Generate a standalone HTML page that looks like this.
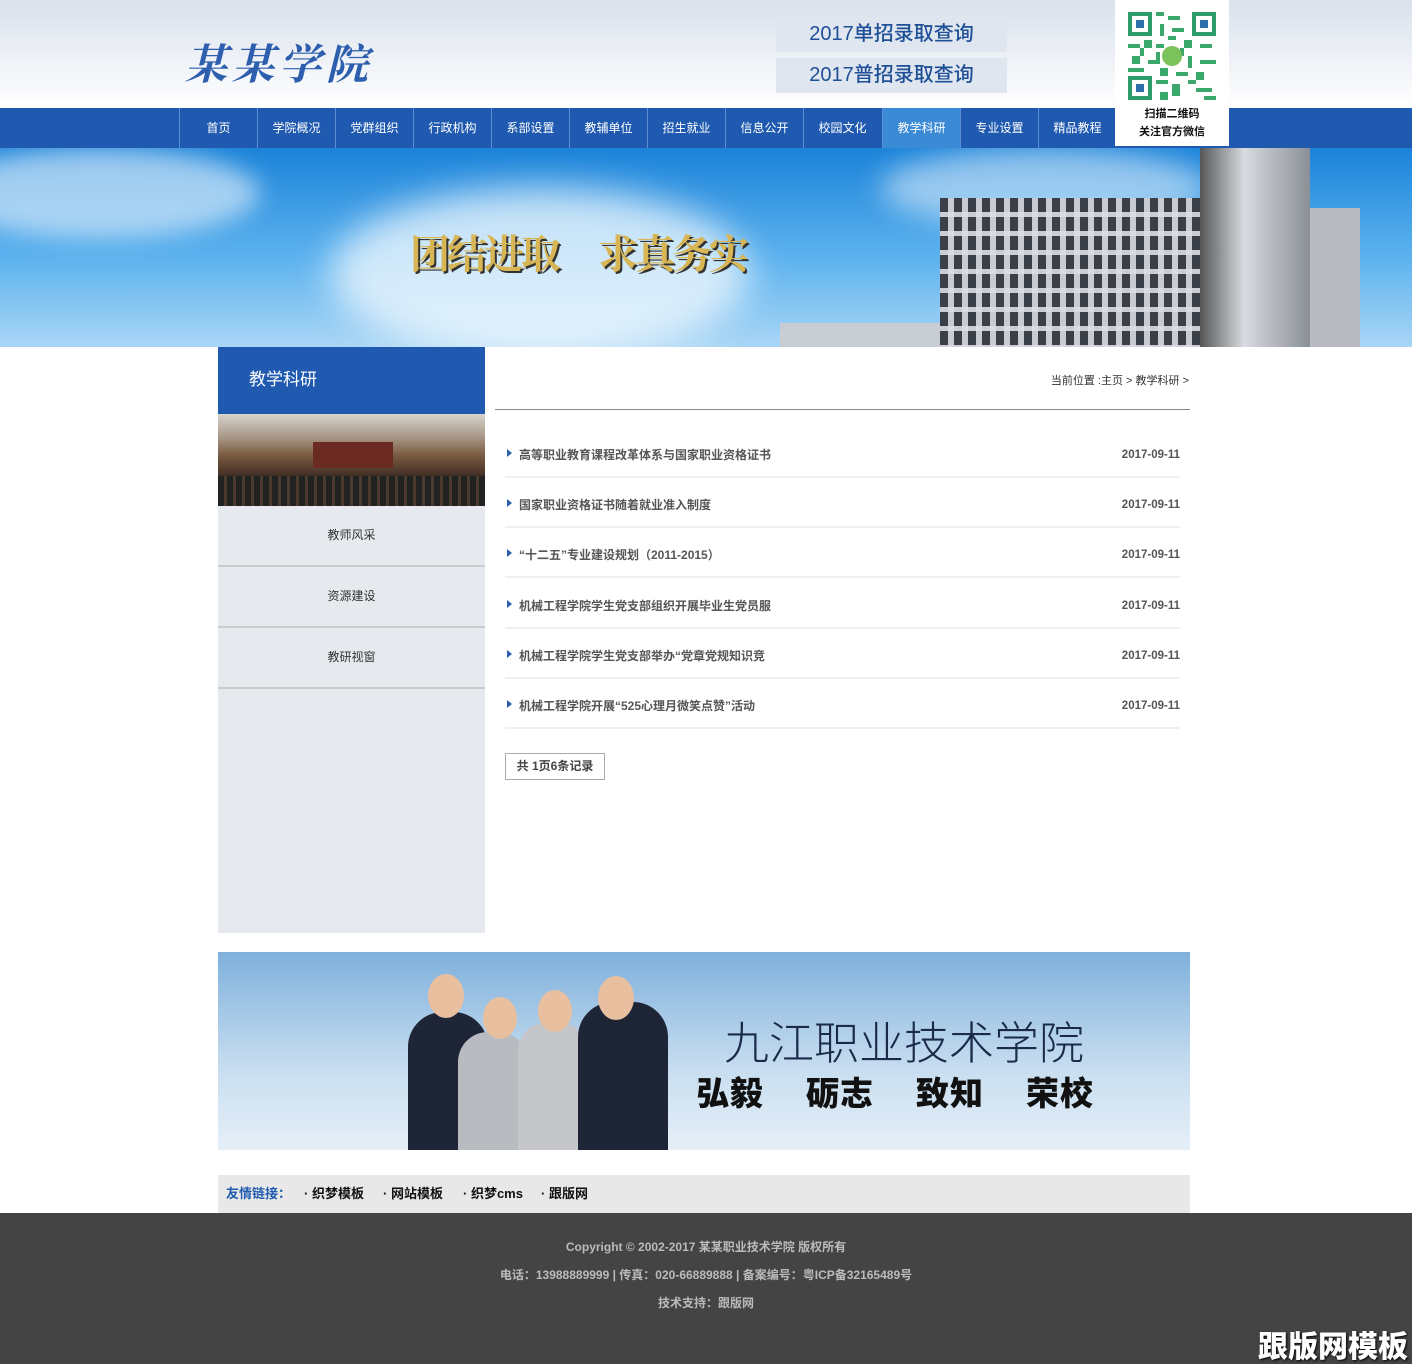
<!DOCTYPE html>
<html><head><meta charset="utf-8"><style>
*{margin:0;padding:0;box-sizing:border-box}
body{width:1427px;height:1364px;overflow:hidden;background:#fff;font-family:"Liberation Sans","Noto Sans CJK SC",sans-serif;position:relative;font-size:12px;color:#333}
.abs{position:absolute}
#head{left:0;top:0;width:1412px;height:108px;background:linear-gradient(#d9e1ec,#f4f6f9 70%,#fff)}
#logo{left:185px;top:32px;font-family:"Noto Serif CJK SC",serif;font-size:42px;color:#2d5fae;letter-spacing:5px;font-style:italic;font-weight:bold}
.btn{left:776px;width:231px;height:35px;background:#dfe6ef;color:#1f4f96;font-size:20px;text-align:center;line-height:35px;font-weight:500}
#qr{left:1115px;top:0;width:114px;height:146px;background:#fff;z-index:3;text-align:center}
#qr .t{font-size:11px;font-weight:bold;color:#111;line-height:18px}
#nav{left:0;top:108px;width:1412px;height:40px;background:#205ab0}
#nav a{position:absolute;top:0;height:40px;width:78px;line-height:40px;text-align:center;color:#fff;font-size:12px;border-left:1px solid #5f8ed0}
#hero{left:0;top:148px;width:1412px;height:199px;background:linear-gradient(180deg,#1b83d9,#5cb2ee 55%,#a9d6f6);overflow:hidden}
#side{left:218px;top:347px;width:267px;height:586px;background:#e6e9ed}
#sh{left:218px;top:347px;width:267px;height:67px;background:#1f5ab0;color:#fff;font-size:17px;line-height:66px;padding-left:31px}
#simg{left:218px;top:414px;width:267px;height:92px;background:linear-gradient(180deg,#d8d3cc 0,#a89888 25%,#7b5a40 45%,#3a2a22 70%,#2a2523 100%)}
.si{left:218px;width:267px;height:61px;border-bottom:2px solid #c9cbce;text-align:center;line-height:58px;font-size:12px;color:#333}
#bc{left:900px;top:372px;width:289px;text-align:right;font-size:11px;color:#333}
#hr{left:495px;top:409px;width:695px;height:1px;background:#888}
.row{left:505px;width:675px;height:50px;border-bottom:2px solid #eef0f2;font-size:12px;color:#555;font-weight:bold}
.row span{position:absolute;left:14px;top:18px}
.row i{position:absolute;left:2px;top:21px;border-left:5px solid #2d5fae;border-top:4px solid transparent;border-bottom:4px solid transparent}
.row b{position:absolute;right:0;top:21px;color:#555;font-size:11.5px}
#pg{left:505px;top:753px;width:100px;height:27px;border:1px solid #aaa;line-height:25px;text-align:center;font-weight:bold;color:#444}
#ban{left:218px;top:952px;width:972px;height:198px;background:linear-gradient(180deg,#7fb0dc,#c8def0 60%,#e6eff8);overflow:hidden}
#links{left:218px;top:1175px;width:972px;height:38px;background:#e8e8e8;line-height:38px;font-size:13px;font-weight:bold;color:#111}
#links span{position:absolute;top:0}
#foot{left:0;top:1213px;width:1412px;height:151px;background:#444;text-align:center;color:#bbb;font-weight:bold;font-size:12px}
#foot p{height:28px;line-height:28px}
</style></head><body>
<div id="head" class="abs"></div>
<div id="logo" class="abs">某某学院</div>
<div class="abs btn" style="top:17px">2017单招录取查询</div>
<div class="abs btn" style="top:58px">2017普招录取查询</div>
<div id="qr" class="abs">
<svg width="88" height="88" viewBox="0 0 22 22" style="margin-top:12px">
<rect width="22" height="22" fill="#fff"/>
<g fill="#2c9c6a">
<rect x="0" y="0" width="6" height="6"/><rect x="16" y="0" width="6" height="6"/><rect x="0" y="16" width="6" height="6"/>
</g>
<g fill="#fff"><rect x="1" y="1" width="4" height="4"/><rect x="17" y="1" width="4" height="4"/><rect x="1" y="17" width="4" height="4"/></g>
<g fill="#2a6fa8"><rect x="2" y="2" width="2" height="2"/><rect x="18" y="2" width="2" height="2"/><rect x="2" y="18" width="2" height="2"/></g>
<g fill="#3aa86a">
<rect x="7" y="0" width="2" height="1"/><rect x="10" y="1" width="3" height="1"/><rect x="8" y="3" width="1" height="3"/><rect x="11" y="4" width="3" height="1"/>
<rect x="0" y="8" width="3" height="1"/><rect x="4" y="7" width="2" height="2"/><rect x="7" y="8" width="2" height="1"/><rect x="14" y="7" width="2" height="2"/><rect x="18" y="8" width="3" height="1"/>
<rect x="1" y="11" width="2" height="2"/><rect x="5" y="12" width="3" height="1"/><rect x="15" y="11" width="1" height="3"/><rect x="18" y="12" width="4" height="1"/>
<rect x="0" y="14" width="4" height="1"/><rect x="8" y="14" width="2" height="2"/><rect x="12" y="15" width="3" height="1"/><rect x="17" y="15" width="2" height="2"/>
<rect x="7" y="17" width="3" height="1"/><rect x="11" y="18" width="2" height="3"/><rect x="15" y="17" width="2" height="1"/><rect x="17" y="19" width="4" height="1"/><rect x="8" y="20" width="2" height="2"/><rect x="19" y="21" width="3" height="1"/>
<rect x="7" y="10" width="1" height="3"/><rect x="13" y="9" width="1" height="2"/><rect x="10" y="6" width="2" height="1"/><rect x="3" y="9" width="1" height="2"/>
</g>
<circle cx="11" cy="11" r="2.5" fill="#7cc25a"/>
</svg>
<div class="t" style="margin-top:2px">扫描二维码<br>关注官方微信</div>
</div>
<div id="nav" class="abs">
<a style="left:179px">首页</a><a style="left:257px">学院概况</a><a style="left:335px">党群组织</a><a style="left:413px">行政机构</a><a style="left:491px">系部设置</a><a style="left:569px">教辅单位</a><a style="left:647px">招生就业</a><a style="left:725px">信息公开</a><a style="left:803px">校园文化</a><a style="left:882px;background:#3a8ad6">教学科研</a><a style="left:960px">专业设置</a><a style="left:1038px">精品教程</a>
</div>
<div id="hero" class="abs">
<div class="abs" style="left:-60px;top:0;width:320px;height:90px;border-radius:50%;background:rgba(255,255,255,.55);filter:blur(12px)"></div>
<div class="abs" style="left:330px;top:40px;width:420px;height:170px;border-radius:50%;background:rgba(255,255,255,.7);filter:blur(18px)"></div>
<div class="abs" style="left:880px;top:0;width:330px;height:80px;border-radius:50%;background:rgba(255,255,255,.5);filter:blur(14px)"></div>
<div class="abs" style="left:410px;top:75px;font-size:40px;font-weight:bold;color:#d9b655;font-family:'Noto Serif CJK SC',serif;text-shadow:2px 2px 0 #333;letter-spacing:-3px">团结进取<span style="margin-left:40px">求真务实</span></div>
<div class="abs" style="left:780px;top:175px;width:170px;height:30px;background:#c8cdd3"></div>
<div class="abs" style="left:940px;top:50px;width:270px;height:150px;background:repeating-linear-gradient(90deg,#3b3f47 0 8px,#c8ccd2 8px 14px)"></div>
<div class="abs" style="left:940px;top:50px;width:270px;height:150px;background:repeating-linear-gradient(180deg,transparent 0 14px,rgba(220,222,226,.9) 14px 19px)"></div>
<div class="abs" style="left:1200px;top:0;width:110px;height:200px;background:linear-gradient(90deg,#555,#d8dbe0 40%,#8a8f96)"></div>
<div class="abs" style="left:1310px;top:60px;width:50px;height:140px;background:#b8bcc2"></div>
</div>
<div id="side" class="abs"></div>
<div id="sh" class="abs">教学科研</div>
<div id="simg" class="abs"><div class="abs" style="left:0;top:62px;width:267px;height:30px;background:repeating-linear-gradient(90deg,#222 0 6px,#4a3a30 6px 9px)"></div><div class="abs" style="left:95px;top:28px;width:80px;height:26px;background:#6b2a22"></div></div>
<div class="abs si" style="top:506px">教师风采</div>
<div class="abs si" style="top:567px">资源建设</div>
<div class="abs si" style="top:628px">教研视窗</div>
<div id="bc" class="abs">当前位置 :主页 &gt; 教学科研 &gt;</div>
<div id="hr" class="abs"></div>
<div class="abs row" style="top:428px"><i></i><span>高等职业教育课程改革体系与国家职业资格证书</span><b>2017-09-11</b></div>
<div class="abs row" style="top:478px"><i></i><span>国家职业资格证书随着就业准入制度</span><b>2017-09-11</b></div>
<div class="abs row" style="top:528px"><i></i><span>“十二五”专业建设规划（2011-2015）</span><b>2017-09-11</b></div>
<div class="abs row" style="top:579px"><i></i><span>机械工程学院学生党支部组织开展毕业生党员服</span><b>2017-09-11</b></div>
<div class="abs row" style="top:629px"><i></i><span>机械工程学院学生党支部举办“党章党规知识竞</span><b>2017-09-11</b></div>
<div class="abs row" style="top:679px"><i></i><span>机械工程学院开展“525心理月微笑点赞”活动</span><b>2017-09-11</b></div>
<div id="pg" class="abs">共 1页6条记录</div>
<div id="ban" class="abs">
<div class="abs" style="left:190px;top:60px;width:80px;height:140px;background:#1e2536;border-radius:35px 35px 0 0"></div>
<div class="abs" style="left:240px;top:80px;width:70px;height:120px;background:#b8bbc0;border-radius:30px 30px 0 0"></div>
<div class="abs" style="left:300px;top:70px;width:70px;height:130px;background:#c4c6ca;border-radius:30px 30px 0 0"></div>
<div class="abs" style="left:360px;top:50px;width:90px;height:150px;background:#1e2536;border-radius:35px 35px 0 0"></div>
<div class="abs" style="left:210px;top:22px;width:36px;height:44px;background:#e8c0a0;border-radius:50%"></div>
<div class="abs" style="left:265px;top:45px;width:34px;height:42px;background:#e8c0a0;border-radius:50%"></div>
<div class="abs" style="left:320px;top:38px;width:34px;height:42px;background:#e8c0a0;border-radius:50%"></div>
<div class="abs" style="left:380px;top:24px;width:36px;height:44px;background:#e8c0a0;border-radius:50%"></div>
<div class="abs" style="left:506px;top:55px;font-size:45px;color:#1a2a48;font-family:'Noto Sans CJK SC',sans-serif;font-weight:300">九江职业技术学院</div>
<div class="abs" style="left:478px;top:115px;font-size:33px;color:#111;font-weight:900;letter-spacing:1px">弘毅<span style="margin-left:42px">砺志</span><span style="margin-left:42px">致知</span><span style="margin-left:42px">荣校</span></div>
</div>
<div id="links" class="abs"><span style="left:8px;color:#1f5ab0">友情链接：</span><span style="left:86px">· 织梦模板</span><span style="left:165px">· 网站模板</span><span style="left:245px">· 织梦cms</span><span style="left:323px">· 跟版网</span></div>
<div id="foot" class="abs"><div style="height:20px"></div><p>Copyright © 2002-2017 某某职业技术学院 版权所有</p><p>电话：13988889999 | 传真：020-66889888 | 备案编号：粤ICP备32165489号</p><p>技术支持：跟版网</p></div>
<div class="abs" style="left:1258px;top:1322px;font-size:30px;font-weight:900;color:#fff;text-shadow:1px 1px 2px #000">跟版网模板</div>
</body></html>
